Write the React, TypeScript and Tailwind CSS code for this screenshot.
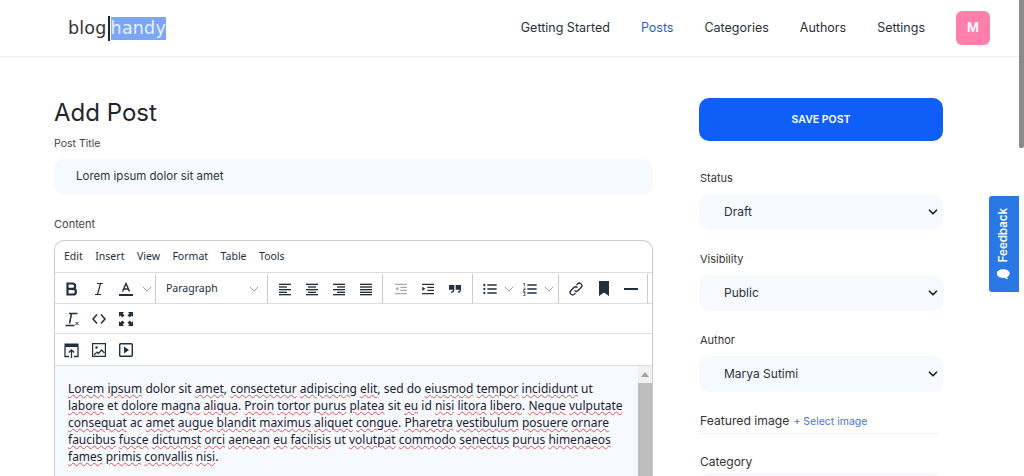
import React from 'react';
import { ChevronDown } from 'lucide-react';

const sans = "font-['Inter',sans-serif]";

const Ic = ({ children }: { children: React.ReactNode }) => (
  <svg width={16} height={16} viewBox="0 0 24 24" fill="#222f3e" className="shrink-0">
    {children}
  </svg>
);

const Chevron = () => (
  <svg width="10" height="10" viewBox="0 0 10 10" fill="none" stroke="#9aa1a9" strokeWidth="1" className="shrink-0">
    <path d="M1 3l4 4 4-4" />
  </svg>
);

const lines = (rows: number[][]) =>
  rows.map(([y, x, w], i) => <rect key={i} x={x} y={y} width={w} height="2" />);

const Btn = ({ children, w = 27 }: { children: React.ReactNode; w?: number }) => (
  <div className="flex items-center justify-center h-[30px] shrink-0" style={{ width: w }}>
    {children}
  </div>
);

const Sep = () => <div className="w-px self-stretch bg-[#ccc] shrink-0" />;

const plainWords = ['dolor', 'sit', 'sed', 'do', 'ut', 'et', 'ac', 'id'];

const editorLines = [
  'Lorem ipsum dolor sit amet, consectetur adipiscing elit, sed do eiusmod tempor incididunt ut',
  'labore et dolore magna aliqua. Proin tortor purus platea sit eu id nisi litora libero. Neque vulputate',
  'consequat ac amet augue blandit maximus aliquet congue. Pharetra vestibulum posuere ornare',
  'faucibus fusce dictumst orci aenean eu facilisis ut volutpat commodo senectus purus himenaeos',
  'fames primis convallis nisi.',
];

const SpellLine = ({ text }: { text: string }) => (
  <div className="whitespace-nowrap">
    {text.split(/(\w+)/).map((part, i) =>
      /\w/.test(part) && !plainWords.includes(part) ? (
        <span key={i} className="underline decoration-wavy decoration-[#e0525a] decoration-[1px] underline-offset-[1px]">
          {part}
        </span>
      ) : (
        <span key={i}>{part}</span>
      ),
    )}
  </div>
);

const Field = ({ label, value }: { label: string; value: string }) => (
  <div className="mb-[21px]">
    <div className="text-[11px] leading-[16px] text-[#333] mb-[8px] pl-px">{label}</div>
    <div className="h-[36px] rounded-[10px] bg-[#f6f9fe] flex items-center justify-between pl-[25px] pr-[3px] text-[12px] text-[#2b3440]">
      <span>{value}</span>
      <ChevronDown size={14} strokeWidth={3} color="#222" />
    </div>
  </div>
);

export default function App() {
  return (
    <div className={`relative h-[476px] w-[1024px] overflow-hidden bg-white ${sans}`}>
      <header className="h-[57px] border-b border-[#eceef1] flex items-center pl-[68px] pr-[34px]">
        <div className="flex items-center font-['DejaVu_Sans',sans-serif] text-[17.5px] tracking-[0.2px] text-[#333]">
          <span>blog</span>
          <span className="w-[2px] h-[25px] bg-[#222] mx-px" />
          <span className="bg-[#7aa7f5] text-[#eaf1fe] h-[23px] leading-[22px]">handy</span>
        </div>
        <nav className="ml-auto flex items-center gap-[31px] text-[12.5px] text-[#2a2f36]">
          <span>Getting Started</span>
          <span className="text-[#1f5fd8]">Posts</span>
          <span>Categories</span>
          <span>Authors</span>
          <span>Settings</span>
          <div className="w-[34px] h-[34px] rounded-[6px] bg-[#ff7fab] text-white font-semibold text-[13px] flex items-center justify-center">
            M
          </div>
        </nav>
      </header>

      <main className="flex pl-[54px] pt-[41px]">
        <section className="w-[599px]">
          <h1 className="text-[24px] leading-[30px] text-[#22262c] mb-[8px]">Add Post</h1>
          <div className="text-[10.5px] leading-[16px] text-[#444] mb-[7px]">Post Title</div>
          <div className="h-[36px] rounded-[10px] bg-[#f6f9fe] flex items-center pl-[22px] text-[11.5px] text-[#2b3440]">
            Lorem ipsum dolor sit amet
          </div>
          <div className="text-[11px] leading-[16px] text-[#444] mt-[21px] mb-[8px]">Content</div>

          <div className="border-x border-t border-[#ccc] rounded-t-[10px] font-['Noto_Sans',sans-serif] overflow-hidden">
            <div className="h-[32px] flex items-center gap-[12.5px] pl-[9px] text-[10.5px] text-[#222f3e] border-b border-[#ddd]">
              <span>Edit</span><span>Insert</span><span>View</span><span>Format</span><span>Table</span><span>Tools</span>
            </div>
            <div className="h-[31px] flex items-center border-b border-[#ddd] pl-[3px] pt-px overflow-hidden">
              <Btn>
                <svg width="13" height="14" viewBox="0 0 13 14" fill="none" stroke="#222f3e" strokeWidth="2.2"><path d="M2.500 1.500h5a2.600 2.600 0 010 5.400h-5zM2.500 6.900h5.600a2.800 2.800 0 010 5.600H2.500z" /></svg>
              </Btn>
              <Btn>
                <svg width="12" height="14" viewBox="0 0 12 14" fill="none" stroke="#222f3e" strokeWidth="1.200"><path d="M4 1.500h6M2 12.500h6M7.500 1.500l-3 11" /></svg>
              </Btn>
              <Btn>
                <svg width="16" height="16" viewBox="0 0 16 16" fill="none" stroke="#222f3e" strokeWidth="1.400"><path d="M4.500 10.500L8 2.500l3.500 8M5.700 8h4.600" /><path d="M1 14h14" strokeWidth="2" /></svg>
              </Btn>
              <div className="w-[16px] flex justify-center"><Chevron /></div>
              <Sep />
              <div className="w-[111px] flex items-center justify-between pl-[10px] pr-[8px] text-[10.5px] text-[#222f3e] shrink-0">
                <span>Paragraph</span><Chevron />
              </div>
              <Sep />
              <div className="w-[3px] shrink-0" />
              <Btn><Ic><g>{lines([[4, 3, 18], [8, 3, 12], [12, 3, 18], [16, 3, 12], [19.500, 3, 18]])}</g></Ic></Btn>
              <Btn><Ic><g>{lines([[4, 3, 18], [8, 6, 12], [12, 3, 18], [16, 6, 12], [19.500, 3, 18]])}</g></Ic></Btn>
              <Btn><Ic><g>{lines([[4, 3, 18], [8, 9, 12], [12, 3, 18], [16, 9, 12], [19.500, 3, 18]])}</g></Ic></Btn>
              <Btn><Ic><g>{lines([[4, 3, 18], [8, 3, 18], [12, 3, 18], [16, 3, 18], [19.500, 3, 18]])}</g></Ic></Btn>
              <div className="w-[3px] shrink-0" />
              <Sep />
              <div className="w-[4px] shrink-0" />
              <Btn>
                <svg width="16" height="16" viewBox="0 0 24 24" fill="#a7abb1"><path d="M3 4h18v2H3zM11 8.500h10v2H11zM11 13h10v2H11zM3 18h18v2H3zM8 8.500v6.500L3.500 11.700z" /></svg>
              </Btn>
              <Btn>
                <svg width="16" height="16" viewBox="0 0 24 24" fill="#222f3e"><path d="M3 4h18v2H3zM11 8.500h10v2H11zM11 13h10v2H11zM3 18h18v2H3zM3.500 8.500v6.500L8 11.700z" /></svg>
              </Btn>
              <Btn>
                <svg width="16" height="16" viewBox="0 0 24 24" fill="#222f3e"><path d="M3 6h8v7c0 3-2 5-5 5l1-2.500c1 0 2-1 2-2.500H3zM13 6h8v7c0 3-2 5-5 5l1-2.500c1 0 2-1 2-2.500h-6z" /></svg>
              </Btn>
              <div className="w-[4px] shrink-0" />
              <Sep />
              <div className="w-[4px] shrink-0" />
              <Btn w={26}>
                <svg width="16" height="16" viewBox="0 0 24 24" fill="#222f3e"><circle cx="3.500" cy="6" r="1.700" /><circle cx="3.500" cy="12" r="1.700" /><circle cx="3.500" cy="18" r="1.700" /><path d="M8 5h14v2H8zM8 11h14v2H8zM8 17h14v2H8z" /></svg>
              </Btn>
              <div className="ml-px"><Chevron /></div>
              <div className="w-[3px] shrink-0" />
              <Btn w={26}>
                <svg width="16" height="16" viewBox="0 0 24 24" fill="#222f3e"><path d="M8 5h14v2H8zM8 11h14v2H8zM8 17h14v2H8zM2 3h2v5H3V4H2zM2 10h3v3.500H3V15h2v1H2v-3.500h2V11H2zM2 17h3v5H2v-1h2v-1H3v-1h1v-1H2z" /></svg>
              </Btn>
              <div className="ml-px"><Chevron /></div>
              <div className="w-[4px] shrink-0" />
              <Sep />
              <Btn w={33}>
                <svg width="16" height="16" viewBox="0 0 16 16" fill="none" stroke="#222f3e" strokeWidth="1.300"><path d="M6.500 9.500a2.500 2.500 0 003.600 0l3-3a2.500 2.500 0 00-3.600-3.600L8.500 4" /><path d="M9.500 6.500a2.500 2.500 0 00-3.600 0l-3 3a2.500 2.500 0 003.600 3.600L7.500 12" /></svg>
              </Btn>
              <Btn w={24}>
                <svg width="12" height="15" viewBox="0 0 12 15" fill="#222f3e"><path d="M1 0h10v15l-5-3.500L1 15z" /></svg>
              </Btn>
              <Btn w={30}>
                <svg width="14" height="2" viewBox="0 0 14 2" fill="#222f3e"><rect width="14" height="2" /></svg>
              </Btn>
              <div className="ml-px shrink-0 self-stretch flex"><Sep /></div>
            </div>
            <div className="h-[30px] flex items-center border-b border-[#ddd] pl-[3px]">
              <Btn>
                <svg width="16" height="16" viewBox="0 0 16 16" fill="none" stroke="#222f3e"><path d="M5 2.500h8.500M7.500 2.500L5.500 12.500" strokeWidth="1.500" /><path d="M1.500 14.500h9" strokeWidth="1.500" /><path d="M11.500 11l3 3M14.500 11l-3 3" strokeWidth="1" /></svg>
              </Btn>
              <Btn>
                <svg width="14" height="12" viewBox="0 0 14 12" fill="none" stroke="#222f3e" strokeWidth="1.500"><path d="M5 1.500L1 6l4 4.500M9 1.500L13 6l-4 4.500" /></svg>
              </Btn>
              <Btn>
                <svg width="14" height="14" viewBox="0 0 14 14" fill="#222f3e"><path d="M0 0h5L3.600 1.400 5.500 3.300 3.300 5.500 1.400 3.600 0 5zM14 0v5l-1.400-1.400-1.900 1.900-2.200-2.200 1.900-1.900L9 0zM0 14V9l1.400 1.400 1.900-1.900 2.200 2.200-1.900 1.900L5 14zM14 14H9l1.400-1.400-1.900-1.900 2.200-2.200 1.900 1.900L14 9z" /></svg>
              </Btn>
            </div>
            <div className="h-[32px] flex items-center border-b border-[#ddd] pl-[3px] pt-px">
              <Btn>
                <svg width="15" height="15" viewBox="0 0 15 15" fill="none" stroke="#222f3e" strokeWidth="1.300"><rect x="0.500" y="0.500" width="14" height="3.500" fill="#222f3e" stroke="none" /><path d="M1 4v9.500h4M14 4v9.500h-4" /><path d="M7.500 15V7M4.800 9.500l2.700-2.700 2.700 2.700" /></svg>
              </Btn>
              <Btn>
                <svg width="14" height="14" viewBox="0 0 14 14" fill="none" stroke="#222f3e" strokeWidth="1.200"><path d="M.6.600h12.800v12.800H.6z" /><circle cx="4.500" cy="4.500" r="1.200" fill="#222f3e" stroke="none" /><path d="M2 12l3-3 1.500 1.500L9.500 7l3 3" /></svg>
              </Btn>
              <Btn>
                <svg width="14" height="14" viewBox="0 0 14 14" fill="none" stroke="#222f3e" strokeWidth="1.400"><rect x="0.700" y="0.700" width="12.600" height="12.600" rx="1" /><path d="M5 3.500l5 3.500-5 3.500z" fill="#222f3e" stroke="none" /></svg>
              </Btn>
            </div>
            <div className="h-[120px] flex bg-[#f6f9fe]">
              <div className="flex-1 min-w-0 pl-[13px] pt-[14px] text-[12px] leading-[17px] text-[#1c2230] font-['Noto_Sans',sans-serif]">
                {editorLines.map((line) => (
                  <SpellLine key={line} text={line} />
                ))}
              </div>
              <div className="w-[14px] shrink-0 flex flex-col items-center bg-[#f1f1f1]">
                <div className="h-[17px] flex items-center">
                  <div className="border-x-[4px] border-b-[5px] border-x-transparent border-b-[#a3a3a3]" />
                </div>
                <div className="flex-1 w-full bg-[#bdbdbd]" />
              </div>
            </div>
          </div>
        </section>

        <aside className="ml-[46px] w-[244px]">
          <div className="h-[43px] rounded-[10px] bg-[#0f5ef7] text-white text-[10.5px] font-semibold flex items-center justify-center mb-[29px]">
            SAVE POST
          </div>
          <Field label="Status" value="Draft" />
          <Field label="Visibility" value="Public" />
          <Field label="Author" value="Marya Sutimi" />
          <div className="-mt-[1px] pl-px border-b border-[#f1f2f4] mr-[4px] flex items-baseline gap-[4px] h-[22px] leading-[18px]">
            <span className="text-[12.2px] text-[#333]">Featured image</span>
            <span className="text-[10.5px] text-[#4a72d8]">+ Select image</span>
          </div>
          <div className="text-[12px] pl-px leading-[16px] text-[#333] mt-[20px] mb-[3px]">Category</div>
          <div className="h-[36px] rounded-[10px] bg-[#f6f9fe]" />
        </aside>
      </main>

      <div className="absolute right-[5px] top-[196px] w-[30px] h-[96px] bg-[#2a78e4] rounded-l-[3px] flex items-center justify-center">
        <div className="[writing-mode:vertical-rl] rotate-180 flex items-center gap-[6px] text-white text-[11.5px] font-semibold">
          <svg width="14" height="12" viewBox="0 0 11 12" preserveAspectRatio="none" fill="white" className="rotate-180 -scale-x-100">
            <path d="M5.500 1C2.500 1 .5 2.900.5 5.200c0 1.400.8 2.600 2 3.400-.1.900-.5 1.700-1 2.400 1.200-.1 2.300-.7 3.100-1.500.3 0 .6.100.9.100 3 0 5-1.900 5-4.400S8.500 1 5.500 1z" />
          </svg>
          <span>Feedback</span>
        </div>
      </div>
      <div className="absolute right-0 top-0 w-[5px] h-[148px] bg-[#8a8a8a] rounded-b-[2px]" />
    </div>
  );
}
